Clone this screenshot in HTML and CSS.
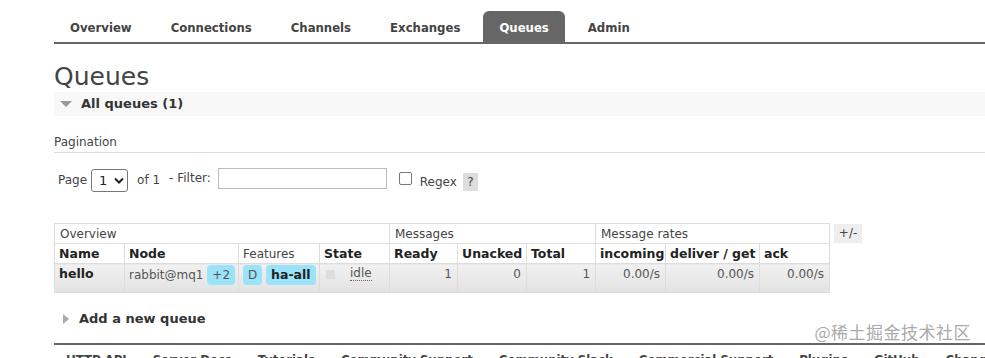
FILE: index.html
```html
<!DOCTYPE html>
<html>
<head>
<meta charset="utf-8">
<link rel="stylesheet" href="styles.css">
</head>
<body>
<div class="page">
  <ul class="tabs">
    <li class="tab">Overview</li>
    <li class="tab">Connections</li>
    <li class="tab">Channels</li>
    <li class="tab">Exchanges</li>
    <li class="tab active">Queues</li>
    <li class="tab">Admin</li>
  </ul>

  <h1 class="title">Queues</h1>
  <div class="section-head"><span class="tri-down"></span>All queues (1)</div>

  <div class="pag-title">Pagination</div>
  <div class="filter-row">
    <span>Page</span>
    <span class="select">1 <svg width="10" height="7" viewBox="0 0 10 7"><path d="M1 1.5 L5 5.5 L9 1.5" fill="none" stroke="#222" stroke-width="2"/></svg></span>
    <span class="of">of 1</span>
    <span class="flabel">- Filter:</span>
    <span class="input"></span>
    <span class="check"></span>
    <span class="regex">Regex</span>
    <span class="help">?</span>
  </div>

  <div class="table-wrap">
    <table class="list">
      <colgroup>
        <col class="c-name"><col class="c-node"><col class="c-feat"><col class="c-state">
        <col class="c-ready"><col class="c-unack"><col class="c-total">
        <col class="c-in"><col class="c-del"><col class="c-ack">
      </colgroup>
      <tr class="group">
        <td colspan="4">Overview</td>
        <td colspan="3">Messages</td>
        <td colspan="3">Message rates</td>
      </tr>
      <tr class="heads">
        <th>Name</th>
        <th>Node</th>
        <th class="light">Features</th>
        <th>State</th>
        <th>Ready</th>
        <th>Unacked</th>
        <th>Total</th>
        <th>incoming</th>
        <th>deliver / get</th>
        <th>ack</th>
      </tr>
      <tr class="row">
        <td class="name">hello</td>
        <td class="node">rabbit@mq1 <span class="badge">+2</span></td>
        <td class="feat"><span class="badge">D</span> <span class="badge bold">ha-all</span></td>
        <td class="state"><span class="sq"></span><span class="idle">idle</span></td>
        <td class="num">1</td>
        <td class="num">0</td>
        <td class="num">1</td>
        <td class="num">0.00/s</td>
        <td class="num">0.00/s</td>
        <td class="num">0.00/s</td>
      </tr>
    </table>
    <span class="plusminus">+/-</span>
  </div>

  <div class="add-head"><span class="tri-right"></span>Add a new queue</div>

  <div class="footer">
    <div class="watermark">@稀土掘金技术社区</div>
    <ul class="links">
      <li>HTTP API</li>
      <li>Server Docs</li>
      <li>Tutorials</li>
      <li>Community Support</li>
      <li>Community Slack</li>
      <li>Commercial Support</li>
      <li>Plugins</li>
      <li>GitHub</li>
      <li>Changelog</li>
    </ul>
  </div>
</div>
</body>
</html>
```
FILE: styles.css
```css
html, body { margin: 0; padding: 0; background: #fff; }
body {
  font-family: "DejaVu Sans", Verdana, sans-serif;
  font-size: 12px;
  color: #444;
  overflow: hidden;
}
.page { padding-left: 54px; }

.tabs {
  list-style: none;
  margin: 0;
  padding: 11px 0 0 0;
  display: flex;
  gap: 7px;
  border-bottom: 2px solid #666;
  height: 31px;
}
.tab {
  padding: 0 16px;
  height: 31px;
  line-height: 33px;
  font-weight: bold;
  font-size: 13px;
  font-stretch: condensed;
  color: #444;
  border-radius: 6px 6px 0 0;
}
.tab.active { background: #666; color: #fff; }

.title {
  margin: 0;
  font-size: 25px;
  font-weight: normal;
  color: #444;
  height: 30px;
  padding-top: 18px;
  line-height: 30px;
}

.section-head {
  background: #f8f8f8;
  height: 24px;
  line-height: 24px;
  font-weight: bold;
  font-size: 13px;
  color: #333;
  display: flex;
  align-items: center;
}
.tri-down {
  width: 0; height: 0;
  border-left: 6px solid transparent;
  border-right: 6px solid transparent;
  border-top: 6px solid #999;
  margin: 0 9px 0 6px;
}

.pag-title {
  margin-top: 18px;
  height: 17px;
  line-height: 17px;
  border-bottom: 1px solid #ddd;
  padding-bottom: 1px;
}

.filter-row {
  display: flex;
  align-items: center;
  margin-top: 15px;
  height: 24px;
  padding-left: 4px;
}
.select {
  box-sizing: border-box;
  width: 37px;
  height: 23px;
  border: 1px solid #777;
  border-radius: 3px;
  margin: 0 9px 0 4px;
  display: flex;
  align-items: center;
  padding-left: 7px;
  gap: 7px;
  color: #222;
  font-size: 13px;
}
.flabel { margin-left: 9px; position: relative; top: -2px; }
.input {
  box-sizing: border-box;
  width: 169px;
  height: 21px;
  border: 1px solid #bbb;
  margin: 0 12px 0 7px;
  position: relative; top: -2px;
}
.check {
  box-sizing: border-box;
  width: 13px; height: 13px;
  border: 1px solid #777;
  border-radius: 2px;
  margin-right: 8px;
  position: relative; top: -2px;
}
.regex { position: relative; top: 2px; }
.help {
  background: #ddd;
  width: 15px;
  height: 18px;
  line-height: 18px;
  text-align: center;
  margin-left: 6px;
  position: relative; top: 2px;
}

.table-wrap {
  display: flex;
  align-items: flex-start;
  margin-top: 31px;
  gap: 4px;
}
.list {
  border-collapse: collapse;
  table-layout: fixed;
  width: 775px;
  font-size: 12px;
}
.list td, .list th {
  border: 1px solid #ddd;
  padding: 0 5px;
  text-align: left;
  white-space: nowrap;
  overflow: hidden;
}
.group td { height: 19px; font-weight: normal; background: #fff; }
.heads th { height: 19px; font-weight: bold; background: #fff; color: #222; font-size: 12.5px; padding: 0 4px; }
.heads th.light { font-weight: normal; color: #444; font-size: 12px; }
.c-name { width: 70px; }
.c-node { width: 114px; }
.c-feat { width: 81px; }
.c-state { width: 70px; }
.c-ready { width: 68px; }
.c-unack { width: 69px; }
.c-total { width: 69px; }
.c-in { width: 70px; }
.c-del { width: 94px; }
.c-ack { width: 70px; }

.row td {
  height: 29px;
  background: linear-gradient(#f1f1f1, #e2e2e2);
  vertical-align: top;
  padding-top: 2px;
  box-sizing: border-box;
}
.row .name { font-weight: bold; color: #222; font-size: 12.5px; padding-left: 4px; }
.row .node { color: #555; padding-top: 1px; padding-left: 4px; }
.row .feat { padding-top: 1px; padding-left: 4px; }
.row .num { text-align: right; color: #555; padding-top: 3px; }
.badge {
  display: inline-block;
  background: #9ae3f9;
  border-radius: 4px;
  padding: 0 5px;
  line-height: 20px;
  color: #555;
}
.badge.bold { font-weight: bold; color: #222; font-size: 12.5px; }
.state { padding-top: 3px; }
.sq {
  display: inline-block;
  width: 9px; height: 9px;
  background: #ddd;
  margin: 4px 15px 0 1px;
  vertical-align: top;
}
.idle {
  border-bottom: 1px dotted #666;
  color: #555;
}
.plusminus {
  background: #eee;
  width: 28px;
  height: 19px;
  line-height: 19px;
  text-align: center;
  margin-top: 1px;
  font-size: 12px;
}

.add-head {
  margin-top: 17px;
  height: 18px;
  line-height: 18px;
  font-weight: bold;
  font-size: 13px;
  color: #333;
  display: flex;
  align-items: center;
}
.tri-right {
  width: 0; height: 0;
  border-top: 5px solid transparent;
  border-bottom: 5px solid transparent;
  border-left: 6px solid #aaa;
  margin: 0 10px 0 9px;
}

.footer {
  margin-top: 15px;
  border-top: 2px solid #666;
  position: relative;
}
.watermark {
  position: absolute;
  right: 14px;
  top: -26px;
  font-family: "Noto Sans CJK SC", sans-serif;
  font-size: 17px;
  color: #aaa;
  letter-spacing: 0.5px;
}
.links {
  list-style: none;
  margin: 0;
  padding: 7px 0 0 12px;
  display: flex;
  gap: 26px;
  white-space: nowrap;
  font-weight: bold;
  font-size: 13px;
  font-stretch: condensed;
  color: #444;
  overflow: hidden;
}
```
